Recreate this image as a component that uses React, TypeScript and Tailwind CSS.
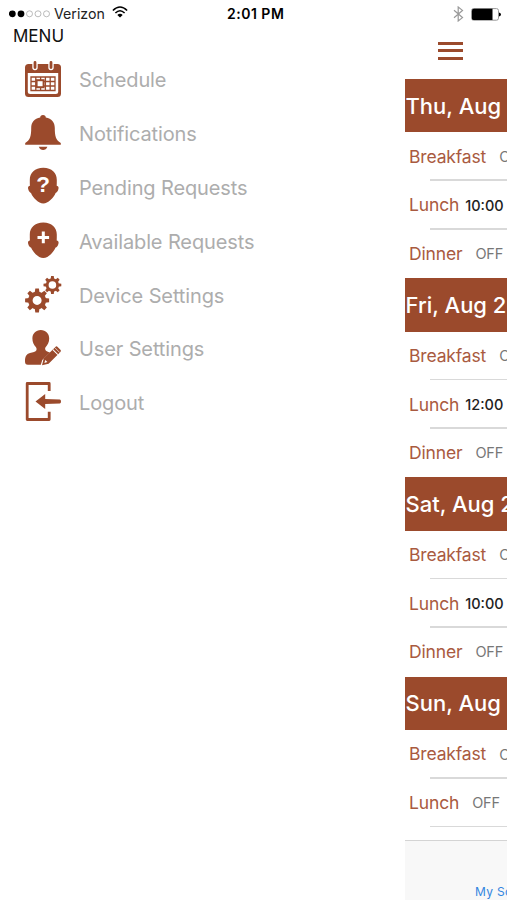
import type { ReactNode } from "react"

const BROWN = "#9b4a2c"

function Icon({ children }: { children: ReactNode }) {
  return (
    <svg viewBox="0 0 40 40" className="w-10 h-10 shrink-0 overflow-visible" fill={BROWN}>
      {children}
    </svg>
  )
}

function CalendarIcon() {
  return (
    <Icon>
      <rect x="2" y="4" width="36" height="33" rx="3.5" />
      <path d="M4.8 13H35.2V31.5Q35.2 34 32.7 34H7.3Q4.8 34 4.8 31.5Z" fill="#fff" />
      <path d="M12 2.5V7.5M28 2.5V7.5" stroke="#fff" strokeWidth="5.4" strokeLinecap="round" />
      <path d="M12 2.5V7.5M28 2.5V7.5" stroke={BROWN} strokeWidth="2.8" strokeLinecap="round" />
      <path
        d="M8 17H32V30.5H8ZM12.8 17V30.5M17.6 17V30.5M22.4 17V30.5M27.2 17V30.5M8 21.5H32M8 26H32"
        fill="none"
        stroke={BROWN}
        strokeWidth="1.3"
      />
      <rect x="13.6" y="20.2" width="7" height="7" fill="#fff" stroke={BROWN} strokeWidth="2" />
    </Icon>
  )
}

function BellIcon() {
  return (
    <Icon>
      <path d="M20 1C21.8 1 22.8 2.1 22.8 3.6C28.6 4.6 31.8 8.4 31.8 14C31.8 21.5 32.6 26 37.8 29V30.8H2.2V29C7.4 26 8.2 21.5 8.2 14C8.2 8.4 11.4 4.6 17.2 3.6C17.2 2.1 18.2 1 20 1Z" />
      <path d="M15.8 32.8H24.4C23.6 34.9 22 36 20.1 36S16.6 34.9 15.8 32.8Z" />
    </Icon>
  )
}

const headPath =
  "M20.3 .8C28.8 .8 33.8 5.8 33.8 13C33.8 15 33.8 17 33.7 18.8C35.6 19 36 20.8 35.2 22.8C34.6 24.5 33.8 25.6 32.6 26C30.6 31 25 36.4 20.3 36.4S10 31 8 26C6.8 25.6 6 24.5 5.4 22.8C4.6 20.8 5 19 6.9 18.8C6.8 17 6.8 15 6.8 13C6.8 5.8 11.8 .8 20.3 .8Z"

function PendingIcon() {
  return (
    <Icon>
      <path d={headPath} />
      <text
        x="20.2"
        y="25.4"
        textAnchor="middle"
        fontSize="22.5"
        fontWeight="700"
        fill="#fff"
        fontFamily="Liberation Sans, sans-serif"
      >
        ?
      </text>
    </Icon>
  )
}

function AvailableIcon() {
  return (
    <Icon>
      <path d={headPath} transform="translate(0 .6)" />
      <path d="M20.3 10.6V22.2M14.5 16.4H26.1" stroke="#fff" strokeWidth="3" />
    </Icon>
  )
}

function Gear({ x, y, r, hole }: { x: number; y: number; r: number; hole: number }) {
  return (
    <g transform={`translate(${x} ${y})`}>
      {[0, 45, 90, 135, 180, 225, 270, 315].map((a) => (
        <path
          key={a}
          transform={`rotate(${a})`}
          d={`M${-r * 0.2} ${-r * 0.65}L${-r * 0.15} ${-r}H${r * 0.15}L${r * 0.2} ${-r * 0.65}Z`}
        />
      ))}
      <circle r={(r * 0.75 + hole) / 2} fill="none" stroke={BROWN} strokeWidth={r * 0.75 - hole} />
    </g>
  )
}

function GearsIcon() {
  return (
    <Icon>
      <Gear x={14.1} y={25.4} r={12} hole={4.5} />
      <Gear x={29.4} y={10} r={8.9} hole={3.8} />
    </Icon>
  )
}

function UserEditIcon() {
  return (
    <Icon>
      <path d="M17.8 1C22.8 1 26.2 4.5 26.2 9.6C26.2 13.3 24.6 16.2 22.4 18.4C21.8 19.3 22.2 21.3 23.3 22C24.7 22.9 26 23.1 27 23.6L19.3 31L17.8 35.8H5C2.8 35.8 2 34.5 2 32.5C2 27.5 3.2 25 7 23.9C9.8 23.1 12.8 22.9 13.4 21.2C13.8 20 13.5 18.8 12.8 18C10.7 15.9 9.4 13.1 9.4 9.6C9.4 4.5 12.8 1 17.8 1Z" />
      <path d="M19 36.2L20.7 29.6L32.4 17.9Q33.5 16.8 34.6 17.9L37.4 20.7Q38.5 21.8 37.4 22.9L25.6 34.8Z" />
      <path d="M21.4 34L22.3 31L24.4 33.1ZM30.2 20.2L35.2 25.2L34.5 25.9L29.5 20.9Z" fill="#fff" />
      <path d="M31.9 18.7L36.7 23.5" stroke="#fff" strokeWidth=".7" />
    </Icon>
  )
}

function LogoutIcon() {
  return (
    <Icon>
      <path d="M26.2 8V.5H4.2V36.5H26.2V28.8" fill="none" stroke={BROWN} strokeWidth="2.8" strokeLinejoin="round" />
      <path d="M12.5 18.5L22.2 11V16L36.8 16.4Q38 16.5 38 18.4T36.8 20.5L22.2 20.9V26Z" />
    </Icon>
  )
}

const menu = [
  { label: "Schedule", icon: <CalendarIcon /> },
  { label: "Notifications", icon: <BellIcon /> },
  { label: "Pending Requests", icon: <PendingIcon /> },
  { label: "Available Requests", icon: <AvailableIcon /> },
  { label: "Device Settings", icon: <GearsIcon /> },
  { label: "User Settings", icon: <UserEditIcon /> },
  { label: "Logout", icon: <LogoutIcon /> },
]

const days = [
  { title: "Thu, Aug 25", lunch: "10:00" },
  { title: "Fri, Aug 26", lunch: "12:00" },
  { title: "Sat, Aug 27", lunch: "10:00" },
  { title: "Sun, Aug 28", lunch: "OFF" },
]

function ShiftRow({ meal, value, last }: { meal: string; value: string; last?: boolean }) {
  const off = value === "OFF"
  return (
    <div className="h-[48.6px] shrink-0 flex flex-col">
      <div className={`flex-1 flex items-center pl-1 whitespace-nowrap ${last ? "" : "pt-[2px]"}`}>
        <span className="text-[17.5px] tracking-[-0.15px] text-[#a95a40]">{meal}</span>
        <span
          className={
            off
              ? "ml-[13px] text-[14.5px] tracking-[-0.2px] text-[#777]"
              : "ml-[6px] text-[14.5px] font-medium text-[#222]"
          }
        >
          {value}
        </span>
      </div>
      {!last && <div className="ml-[25px] h-[1.5px] bg-[#d9d9d9]" />}
    </div>
  )
}

function StatusBar() {
  return (
    <div className="absolute inset-x-0 top-0 h-7 flex items-center text-black">
      <div className="flex items-center w-[227px] pl-[9px]">
        <svg width="42" height="8" viewBox="0 0 42 8">
          <circle cx="3.3" cy="3.8" r="3.4" />
          <circle cx="12" cy="3.8" r="3.4" />
          <circle cx="20.5" cy="3.8" r="3" fill="none" stroke="#aaa" strokeWidth=".8" />
          <circle cx="29" cy="3.8" r="3" fill="none" stroke="#aaa" strokeWidth=".8" />
          <circle cx="37.5" cy="3.8" r="3" fill="none" stroke="#aaa" strokeWidth=".8" />
        </svg>
        <span className="ml-[3px] text-[14.2px] text-[#222]">Verizon</span>
        <svg width="16" height="12" viewBox="0 0 16 12" className="ml-[7px] -mt-[3px]" fill="none" stroke="#000">
          <path d="M.9 4.5Q8-2.5 15.1 4.5M3.4 7Q8 2.5 12.6 7" strokeWidth="1.6" />
          <path d="M8 11.5L5.3 8.9Q8 6.4 10.7 8.9Z" fill="#000" stroke="none" />
        </svg>
      </div>
      <span className="-mt-px text-[14px] font-semibold tracking-[0.5px]">2:01 PM</span>
      <svg width="11" height="16" viewBox="0 0 11 16" className="ml-auto" fill="none" stroke="#999" strokeWidth="1.2">
        <path d="M1 4.3L9.5 11.6L5.2 15V1L9.5 4.4L1 11.7" />
      </svg>
      <svg width="30" height="13" viewBox="0 0 30 13" className="ml-[7px] mr-[6px]">
        <rect x=".5" y=".6" width="27" height="11.6" rx="2" fill="#fff" stroke="#999" />
        <path d="M2.6 .8H21.5V12H2.6Q1 12 1 10.4V2.4Q1 .8 2.6 .8Z" />
        <path d="M28 4.4Q30 4.8 30 6.4T28 8.4Z" />
      </svg>
    </div>
  )
}

export default function App() {
  return (
    <div className="relative flex w-[507px] h-[900px] overflow-hidden bg-white font-['Inter',sans-serif]">
      <nav className="w-[405px] shrink-0 pt-[26px]">
        <h1 className="h-[27px] pl-[13px] text-[17px] leading-5 text-[#111]">MENU</h1>
        {menu.map((m) => (
          <div key={m.label} className="flex items-center h-[53.8px] pl-[23px]">
            {m.icon}
            <span className="ml-[16px] pt-px text-[20px] leading-6 tracking-[-0.12px] text-[#adadad]">{m.label}</span>
          </div>
        ))}
      </nav>

      <main className="w-[102px] shrink-0 flex flex-col overflow-hidden">
        <div className="h-[79px] shrink-0 pt-[42px] pl-[33px]">
          <div className="w-[25px] flex flex-col gap-[4.4px]">
            <div className="h-[3px] bg-[#9b4a2c]" />
            <div className="h-[3px] bg-[#9b4a2c]" />
            <div className="h-[3px] bg-[#9b4a2c]" />
          </div>
        </div>
        <div className="h-[761px] shrink-0 overflow-hidden">
          {days.map((d) => (
            <section key={d.title}>
              <div className="h-[53.4px] flex items-center pl-[0.5px] pt-px bg-[#9b4a2c] text-white text-[22px] font-medium whitespace-nowrap">
                {d.title}
              </div>
              <ShiftRow meal="Breakfast" value="OFF" />
              <ShiftRow meal="Lunch" value={d.lunch} />
              <ShiftRow meal="Dinner" value="OFF" last />
            </section>
          ))}
        </div>
        <div className="flex-1 flex items-end border-t border-[#d4d4d4] bg-[#f8f8f8] pl-[70px]">
          <span className="text-[12px] leading-4 tracking-[0.3px] text-[#3486e0] whitespace-nowrap">My Schedule</span>
        </div>
      </main>

      <StatusBar />
    </div>
  )
}
